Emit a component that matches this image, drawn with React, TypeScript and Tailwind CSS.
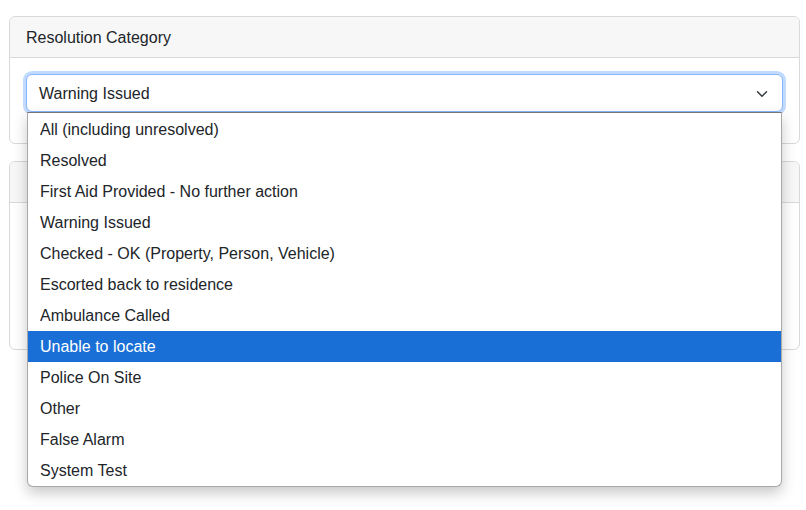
import { ChevronDown } from "lucide-react";

const options = [
	"All (including unresolved)",
	"Resolved",
	"First Aid Provided - No further action",
	"Warning Issued",
	"Checked - OK (Property, Person, Vehicle)",
	"Escorted back to residence",
	"Ambulance Called",
	"Unable to locate",
	"Police On Site",
	"Other",
	"False Alarm",
	"System Test",
];

const font = { fontFamily: '"Segoe UI", "Liberation Sans", sans-serif' };

const App = () => {
	return (
		<div
			className="min-h-[510px] w-full bg-white pt-4 pl-[9px] pr-[6px] text-[#212529]"
			style={font}>
			<section className="flex flex-col rounded-[6px] border border-[#d9d9d9]">
				<header className="h-[41px] flex items-center px-4 pt-[2px] rounded-t-[6px] bg-[#f7f7f7] border-b border-[#d9d9d9] text-[16px]">
					Resolution Category
				</header>

				<div className="relative px-4 pt-4 pb-[31px]">
					<div className="h-[38px] flex items-center justify-between pl-3 pr-[11px] pt-[1px] rounded-[6px] border border-[#86b7fe] bg-white ring-[3px] ring-[#c1dafd] text-[16px]">
						<span>Warning Issued</span>
						<ChevronDown size={18} strokeWidth={2} className="text-[#343a40]" />
					</div>

					<ul className="absolute z-10 left-[17px] right-[17px] top-[54px] flex flex-col pt-[1px] rounded-b-[6px] border border-[#a8a8a8] border-t-[#767676] bg-white shadow-[0_6px_14px_rgba(0,0,0,0.22)] text-[16px]">
						{options.map((o) => (
							<li
								key={o}
								className={
									o === "Unable to locate"
										? "h-[31px] flex items-center px-3 bg-[#196fd6] text-white"
										: "h-[31px] flex items-center px-3"
								}>
								{o}
							</li>
						))}
					</ul>
				</div>
			</section>

			<section className="mt-[17px] flex flex-col h-[189px] rounded-[6px] border border-[#d9d9d9]">
				<header className="h-[41px] rounded-t-[6px] bg-[#f7f7f7] border-b border-[#d9d9d9]" />
				<div className="grow" />
			</section>
		</div>
	);
};

export default App;
